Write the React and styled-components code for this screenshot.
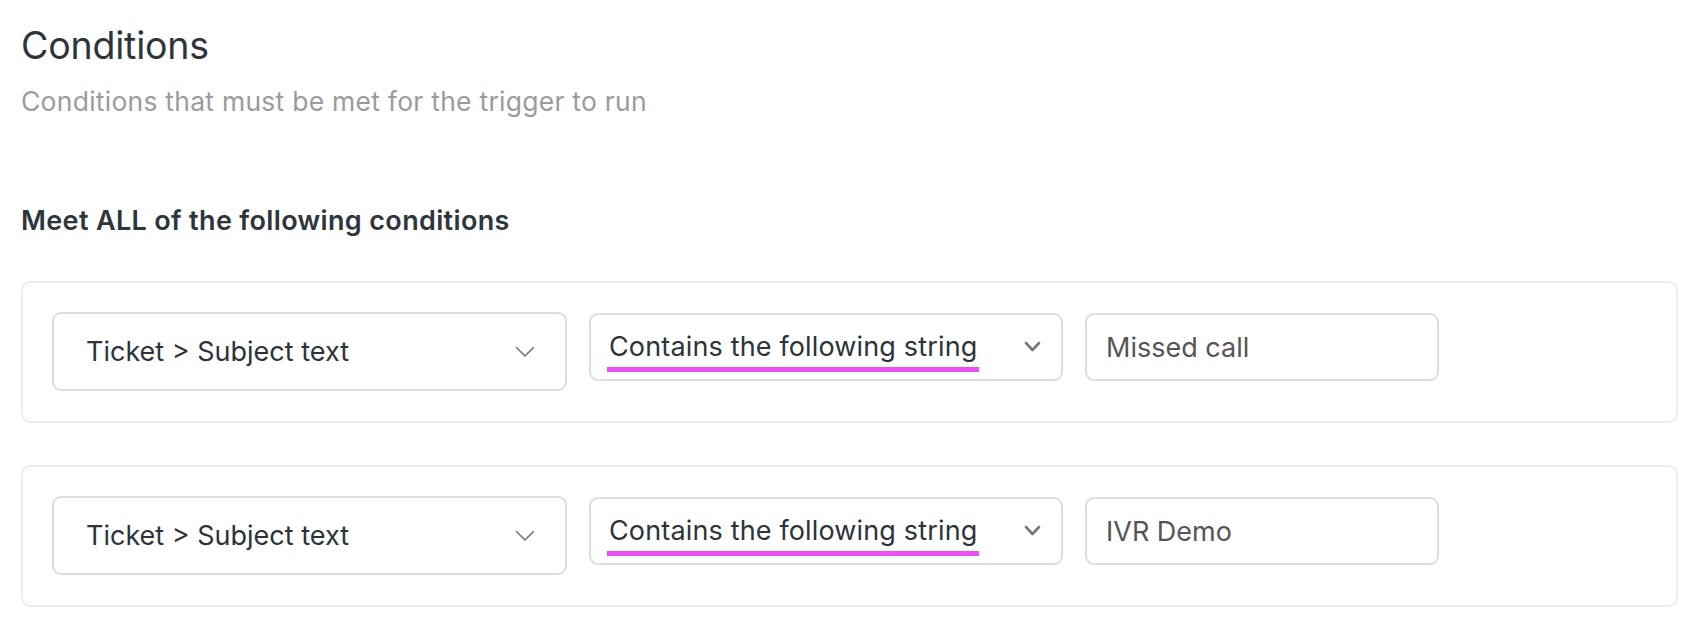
import React from 'react'
import styled, { createGlobalStyle } from 'styled-components'

const GlobalStyle = createGlobalStyle`
    body {
        margin: 0;
        background: #ffffff;
        font-family: Inter, "Noto Sans", "Liberation Sans", sans-serif;
    }
`;

const conditions = [
    { field: 'Ticket > Subject text', operator: 'Contains the following string', value: 'Missed call' },
    { field: 'Ticket > Subject text', operator: 'Contains the following string', value: 'IVR Demo' },
];

function Chevron({ thin }) {
    return thin ? (
        <svg width="20" height="12" viewBox="0 0 20 12" fill="none">
            <path d="M1.5 1.5 L10 10 L18.5 1.5" stroke="#6f757d" strokeWidth="1.6" strokeLinecap="round" strokeLinejoin="round" />
        </svg>
    ) : (
        <svg width="17" height="12" viewBox="0 0 17 12" fill="none">
            <path d="M2 2 L8.5 9 L15 2" stroke="#7a7a7a" strokeWidth="2.6" strokeLinecap="round" strokeLinejoin="round" />
        </svg>
    );
}

function App() {
    return (
        <Page>
            <GlobalStyle />
            <Title>Conditions</Title>
            <Subtitle>Conditions that must be met for the trigger to run</Subtitle>
            <Heading>Meet ALL of the following conditions</Heading>
            <List>
                {conditions.map((c, i) => (
                    <Card key={i}>
                        <FieldSelect>
                            <span>{c.field}</span>
                            <Chevron thin />
                        </FieldSelect>
                        <OperatorSelect>
                            <Marked>{c.operator}</Marked>
                            <Chevron />
                        </OperatorSelect>
                        <ValueInput>{c.value}</ValueInput>
                    </Card>
                ))}
            </List>
        </Page>
    )
}

const Page = styled.div`
    padding: 23px 10px 0 21px;
`;

const Title = styled.h1`
    margin: 0;
    font-size: 37.5px;
    line-height: 46px;
    font-weight: 400;
    color: #2f343b;
    letter-spacing: -0.2px;
`;

const Subtitle = styled.p`
    margin: 17px 0 0;
    font-size: 26.5px;
    line-height: 30px;
    letter-spacing: 0.25px;
    color: #9b9b9b;
`;

const Heading = styled.h3`
    margin: 89px 0 0;
    font-size: 27px;
    line-height: 32px;
    font-weight: 600;
    letter-spacing: 0.35px;
    color: #2f353c;
`;

const List = styled.div`
    margin-top: 44px;
    display: flex;
    flex-direction: column;
    gap: 42px;
`;

const Card = styled.div`
    box-sizing: border-box;
    width: 1657px;
    height: 142px;
    border: 2px solid #ececec;
    border-radius: 9px;
    padding: 29px 29px 0;
    display: flex;
    align-items: flex-start;
    gap: 22px;
`;

const Box = styled.div`
    box-sizing: border-box;
    border: 2px solid #dedede;
    border-radius: 9px;
    display: flex;
    align-items: center;
    justify-content: space-between;
    background: #fff;
`;

const FieldSelect = styled(Box)`
    width: 515px;
    height: 79px;
    border-color: #dadde1;
    padding: 0 30px 0 32px;
    font-size: 27px;
    color: #2d333a;
`;

const OperatorSelect = styled(Box)`
    margin-top: 1px;
    width: 474px;
    height: 68px;
    padding: 0 20px 0 18px;
    font-size: 27px;
    letter-spacing: 0.15px;
    color: #2d333a;
`;

const Marked = styled.span`
    position: relative;
    top: -1px;
    &::after {
        content: '';
        position: absolute;
        left: -2px;
        right: -2px;
        bottom: -9px;
        height: 5px;
        background: #ec4ff5;
    }
`;

const ValueInput = styled(Box)`
    margin-top: 1px;
    width: 354px;
    height: 68px;
    padding: 0 19px;
    font-size: 27px;
    color: #555555;
`;

export default App;
